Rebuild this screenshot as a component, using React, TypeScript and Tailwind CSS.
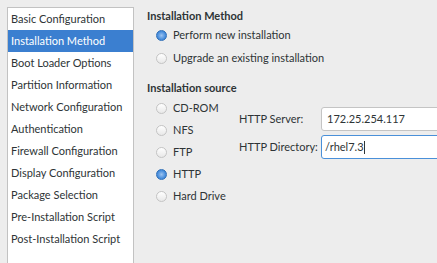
import React from 'react';

const pages = [
  'Basic Configuration',
  'Installation Method',
  'Boot Loader Options',
  'Partition Information',
  'Network Configuration',
  'Authentication',
  'Firewall Configuration',
  'Display Configuration',
  'Package Selection',
  'Pre-Installation Script',
  'Post-Installation Script',
];

const sources = ['CD-ROM', 'NFS', 'FTP', 'HTTP', 'Hard Drive'];

function Radio({ on, label }: { on?: boolean; label: string }) {
  return (
    <div className="flex items-center h-[22px] whitespace-nowrap">
      <span
        className={
          on
            ? 'shrink-0 w-[11px] h-[11px] rounded-full border border-[#2f6fb8] bg-[radial-gradient(circle,#9cc3f0_0%,#4a8fdd_60%,#3a7cc8_100%)]'
            : 'shrink-0 w-[11px] h-[11px] rounded-full border border-[#c4c4c4] bg-gradient-to-b from-[#ffffff] to-[#e8e8e8]'
        }
      />
      <span className="ml-[6px]">{label}</span>
    </div>
  );
}

export default function App() {
  return (
    <div className="w-[437px] h-[263px] overflow-hidden bg-[#ededed] text-[#2e3436] text-[11px] flex font-['Lato',sans-serif] whitespace-nowrap">
      {/* Page list */}
      <div className="shrink-0 ml-[7px] mt-[7px] w-[127px] h-[270px] bg-white border border-[#c2c2c2]">
        {pages.map((p, i) => (
          <div
            key={p}
            className={
              i === 1
                ? 'h-[22px] flex items-center pl-[3px] bg-[#3b7fd0] text-white'
                : 'h-[22px] flex items-center pl-[3px]'
            }
          >
            {p}
          </div>
        ))}
      </div>

      {/* Settings */}
      <div className="ml-[13px] pt-[9px] shrink-0">
        <div className="font-bold h-[14px] leading-[14px]">Installation Method</div>
        <div className="ml-[9px] mt-px flex flex-col gap-px">
          <Radio on label="Perform new installation" />
          <Radio label="Upgrade an existing installation" />
        </div>

        <div className="font-bold mt-[12px] h-[14px] leading-[14px]">Installation source</div>
        <div className="flex mt-[2px]">
          <div className="ml-[9px] w-[83px]">
            {sources.map((s) => (
              <Radio key={s} on={s === 'HTTP'} label={s} />
            ))}
          </div>
          <div className="mt-[10px] flex flex-col gap-[4px]">
            <div className="flex items-center">
              <span className="w-[82px]">HTTP Server:</span>
              <div className="w-[130px] h-[24px] bg-white border border-[#c4c4c4] rounded-[3px] flex items-center pl-[5px]">
                172.25.254.117
              </div>
            </div>
            <div className="flex items-center">
              <span className="w-[82px]">HTTP Directory:</span>
              <div className="w-[130px] h-[24px] bg-white border border-[#4a90d9] rounded-[3px] flex items-center pl-[3px]">
                /rhel7.3<span className="w-px h-[13px] bg-[#2e3436]" />
              </div>
            </div>
          </div>
        </div>
      </div>
    </div>
  );
}
